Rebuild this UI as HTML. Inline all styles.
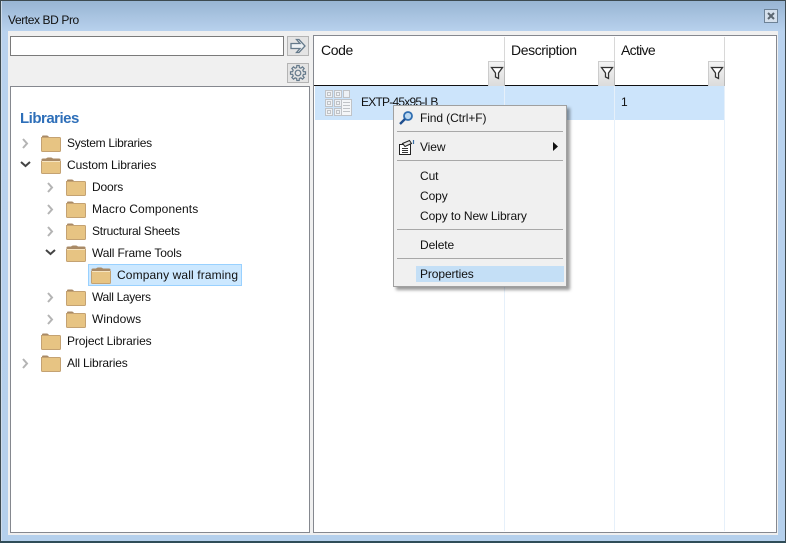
<!DOCTYPE html>
<html><head><meta charset="utf-8">
<style>
html,body{margin:0;padding:0;width:786px;height:543px;overflow:hidden;background:#fff}
body{position:relative;font-family:"Liberation Sans",sans-serif;font-size:12px;color:#111}
.a{position:absolute}
.t{position:absolute;white-space:nowrap;font-size:12px;line-height:16px;letter-spacing:-.1px}
.h{position:absolute;white-space:nowrap;font-size:14px;line-height:18px;letter-spacing:-.4px}
.s{position:absolute;left:397px;width:166px;height:1px;background:#a8a8a8}
.sep{position:absolute;top:37px;width:1px;height:494px;background:#e6f0fa}
.fb{position:absolute;top:61px;width:15px;height:24px;background:linear-gradient(#f4f4f4,#dcdcdc);border-right:1px solid #bbb;border-left:1px solid #ccc;border-top:1px solid #ccc}
svg{position:absolute;overflow:visible}
</style></head><body>
<svg width="0" height="0" style="position:absolute"><defs>
<g id="fo"><path d="M1 3V1.500Q1 .5 2 .5H6Q7 .5 8 2H9V3Z" fill="#a98a66"/><path d="M.5 2.500H18.500Q19.500 2.500 19.500 3.500V15.500Q19.500 16.500 18.500 16.500H1.500Q.5 16.500 .5 15.500Z" fill="#e7c483" stroke="#c4a272"/></g>
<g id="fe"><path d="M.5 5V2.500Q.5 1.500 2 1.500H5Q6 .5 7 .5H10Q11 .5 12 1.500H18Q19.500 1.500 19.500 2.500V5Z" fill="#a98a66"/><path d="M.5 4.500H19.500V15.500Q19.500 16.500 18.500 16.500H1.500Q.5 16.500 .5 15.500Z" fill="#e7c483" stroke="#c4a272"/><path d="M1 4.500H19" stroke="#f6e4c0"/></g>
<path id="cr" d="M1 1L5 5.500L1 10" fill="none" stroke="#b4b4b4" stroke-width="2"/>
<path id="cd" d="M0 1L4.500 5L9 1" fill="none" stroke="#444" stroke-width="2"/>
<g id="fn"><path d="M1.500 1.500H12.500L8.500 7V12.500L5.500 11V7Z" fill="#fff" stroke="#333" stroke-width="1.300"/></g>
</defs></svg>

<!-- window frame -->
<div class="a" style="left:0;top:0;width:786px;height:543px;box-sizing:border-box;border:1px solid #3d4a50;border-bottom:2px solid #2f4d58;background:linear-gradient(#98b5d3 0,#b9d2ee 31px,#b5d0ec 100%)"></div>
<div class="a" style="left:1px;top:1px;width:1px;height:540px;background:#cfdcea"></div>
<div class="a" style="left:8px;top:31px;width:770px;height:504px;background:#f0f0f0"></div>
<div class="t" style="left:8px;top:12px;letter-spacing:-.4px">Vertex BD Pro</div>
<!-- close -->
<div class="a" style="left:764px;top:9px;width:14px;height:14px;box-sizing:border-box;border:1px solid #6d8296;background:#d5e0ec"></div>
<svg style="left:764px;top:9px" width="14" height="14"><path d="M4 4L10 10M10 4L4 10" stroke="#5b6670" stroke-width="2"/></svg>

<!-- search -->
<div class="a" style="left:10px;top:36px;width:274px;height:20px;box-sizing:border-box;border:1px solid #7a7a7a;background:#fff"></div>
<div class="a" style="left:287px;top:36px;width:22px;height:20px;box-sizing:border-box;border:1px solid #b4b4b4;background:#e4e4e4"></div>
<svg style="left:287px;top:36px" width="22" height="20"><path d="M4 7.500H13L9.500 3.500H12L18 10L12 16.500H9.500L13 12.500H4Z" fill="#eef2f5" stroke="#64798a" stroke-width="1.300"/></svg>
<div class="a" style="left:287px;top:63px;width:22px;height:20px;box-sizing:border-box;border:1px solid #b4b4b4;background:#e4e4e4"></div>
<svg style="left:287px;top:63px" width="22" height="20"><g transform="translate(11 10)" fill="none" stroke="#64798a" stroke-width="1.200"><path d="M5.430-1.350L7.510-1.190V1.190L5.430 1.350L4.790 2.880L6.150 4.470L4.470 6.150L2.880 4.790L1.350 5.430L1.190 7.510H-1.190L-1.350 5.430L-2.880 4.790L-4.470 6.150L-6.150 4.470L-4.790 2.880L-5.430 1.350L-7.510 1.190V-1.190L-5.430-1.350L-4.790-2.880L-6.150-4.470L-4.470-6.150L-2.880-4.790L-1.350-5.430L-1.190-7.510H1.190L1.350-5.430L2.880-4.790L4.470-6.150L6.150-4.470L4.790-2.880Z"/><circle r="2.800"/></g></svg>

<!-- left panel -->
<div class="a" style="left:10px;top:86px;width:300px;height:447px;box-sizing:border-box;border:1px solid #85888f;background:#fff"></div>
<div class="a" style="left:20px;top:110px;font-size:15px;line-height:18px;font-weight:bold;letter-spacing:-.5px;color:#2e6fb9;white-space:nowrap">Libraries</div>

<div class="a" style="left:88px;top:264px;width:154px;height:22px;box-sizing:border-box;border:1px solid #99d1ff;background:#cce8ff"></div>

<svg style="left:22px;top:138px" width="8" height="12"><use href="#cr"/></svg>
<svg style="left:41px;top:135px" width="21" height="18"><use href="#fo"/></svg>
<div class="t" style="left:67px;top:135px;letter-spacing:-.28px">System Libraries</div>

<svg style="left:21px;top:161px" width="10" height="8"><use href="#cd"/></svg>
<svg style="left:41px;top:157px" width="21" height="18"><use href="#fe"/></svg>
<div class="t" style="left:67px;top:157px;letter-spacing:-.09px">Custom Libraries</div>

<svg style="left:47px;top:182px" width="8" height="12"><use href="#cr"/></svg>
<svg style="left:66px;top:179px" width="21" height="18"><use href="#fo"/></svg>
<div class="t" style="left:92px;top:179px;letter-spacing:-.18px">Doors</div>

<svg style="left:47px;top:204px" width="8" height="12"><use href="#cr"/></svg>
<svg style="left:66px;top:201px" width="21" height="18"><use href="#fo"/></svg>
<div class="t" style="left:92px;top:201px;letter-spacing:.1px">Macro Components</div>

<svg style="left:47px;top:226px" width="8" height="12"><use href="#cr"/></svg>
<svg style="left:66px;top:223px" width="21" height="18"><use href="#fo"/></svg>
<div class="t" style="left:92px;top:223px;letter-spacing:-.25px">Structural Sheets</div>

<svg style="left:46px;top:249px" width="10" height="8"><use href="#cd"/></svg>
<svg style="left:66px;top:245px" width="21" height="18"><use href="#fe"/></svg>
<div class="t" style="left:92px;top:245px;letter-spacing:-.15px">Wall Frame Tools</div>

<svg style="left:91px;top:267px" width="21" height="18"><use href="#fe"/></svg>
<div class="t" style="left:117px;top:267px;letter-spacing:.12px">Company wall framing</div>

<svg style="left:47px;top:292px" width="8" height="12"><use href="#cr"/></svg>
<svg style="left:66px;top:289px" width="21" height="18"><use href="#fo"/></svg>
<div class="t" style="left:92px;top:289px;letter-spacing:-.33px">Wall Layers</div>

<svg style="left:47px;top:314px" width="8" height="12"><use href="#cr"/></svg>
<svg style="left:66px;top:311px" width="21" height="18"><use href="#fo"/></svg>
<div class="t" style="left:92px;top:311px;letter-spacing:.08px">Windows</div>

<svg style="left:41px;top:333px" width="21" height="18"><use href="#fo"/></svg>
<div class="t" style="left:67px;top:333px;letter-spacing:-.13px">Project Libraries</div>

<svg style="left:22px;top:358px" width="8" height="12"><use href="#cr"/></svg>
<svg style="left:41px;top:355px" width="21" height="18"><use href="#fo"/></svg>
<div class="t" style="left:67px;top:355px;letter-spacing:-.16px">All Libraries</div>

<!-- right panel -->
<div class="a" style="left:313px;top:35px;width:464px;height:498px;box-sizing:border-box;border:1px solid #85888f;background:#fff"></div>
<div class="a" style="left:315px;top:86px;width:410px;height:34px;background:#cce4fb"></div>
<div class="sep" style="left:504px"></div>
<div class="sep" style="left:614px"></div>
<div class="sep" style="left:724px"></div>
<div class="a" style="left:504px;top:37px;width:1px;height:49px;background:#d8d8d8"></div>
<div class="a" style="left:614px;top:37px;width:1px;height:49px;background:#d8d8d8"></div>
<div class="a" style="left:724px;top:37px;width:1px;height:49px;background:#d8d8d8"></div>
<div class="a" style="left:314px;top:85px;width:411px;height:1px;background:#111"></div>
<div class="h" style="left:321px;top:41px">Code</div>
<div class="h" style="left:511px;top:41px">Description</div>
<div class="h" style="left:621px;top:41px;letter-spacing:-.7px">Active</div>
<div class="fb" style="left:488px"></div><svg style="left:490px;top:66px" width="14" height="15"><use href="#fn"/></svg>
<div class="fb" style="left:598px"></div><svg style="left:600px;top:66px" width="14" height="15"><use href="#fn"/></svg>
<div class="fb" style="left:708px"></div><svg style="left:710px;top:66px" width="14" height="15"><use href="#fn"/></svg>

<!-- row icon -->
<svg style="left:325px;top:90px" width="28" height="27" fill="#eef1f5" stroke="#c0c3c7">
<rect x=".5" y=".5" width="7" height="7"/><rect x="9.500" y=".5" width="7" height="7"/><rect x="18.500" y=".5" width="6" height="7"/>
<rect x=".5" y="9.500" width="7" height="7"/><rect x="9.500" y="9.500" width="7" height="7"/>
<rect x=".5" y="18.500" width="7" height="7"/><rect x="9.500" y="18.500" width="7" height="7"/>
<rect x="2.500" y="2.500" width="3" height="3"/><rect x="11.500" y="2.500" width="3" height="3"/><rect x="2.500" y="11.500" width="3" height="3"/><rect x="11.500" y="11.500" width="3" height="3"/><rect x="2.500" y="20.500" width="3" height="3"/><rect x="11.500" y="20.500" width="3" height="3"/>
<rect x="16.500" y="9.500" width="10" height="16" fill="#f4f6f8"/><path d="M18 12.500H25M18 15.500H25M18 18.500H25M18 21.500H25" fill="none"/>
</svg>
<div class="t" style="left:361px;top:94px;letter-spacing:-.78px">EXTP-45x95-LB</div>
<div class="t" style="left:621px;top:94px">1</div>

<!-- context menu -->
<div class="a" style="left:393px;top:105px;width:174px;height:182px;box-sizing:border-box;border:1px solid #a0a0a0;background:#f0f0f0;box-shadow:3px 3px 3px rgba(0,0,0,.4)"></div>
<div class="a" style="left:416px;top:266px;width:148px;height:16px;background:#c4dff6"></div>
<svg style="left:398px;top:110px" width="16" height="16"><circle cx="10" cy="6" r="4" fill="#bcd8f0" stroke="#2f6db0" stroke-width="1.800"/><path d="M7 9L2 14" stroke="#1f4f8f" stroke-width="2.400"/></svg>
<svg style="left:398px;top:139px" width="17" height="16"><path d="M1.500 5.500H12.500V15.500H1.500Z" fill="#fff" stroke="#222"/><path d="M4.500 4.500L11.500 1.500L13.500 4.500L7 7.500Z" fill="#e8e8e8" stroke="#222"/><path d="M4 9.500H10M4 11.500H10M4 13.500H10" stroke="#333"/><path d="M15.500 1V5" stroke="#3a6ea5" stroke-width="1.200"/></svg>
<div class="t" style="left:420px;top:110px">Find (Ctrl+F)</div>
<div class="s" style="top:131px"></div>
<div class="t" style="left:420px;top:139px">View</div>
<svg style="left:553px;top:142px" width="5" height="9"><path d="M0 0L5 4.500L0 9Z" fill="#111"/></svg>
<div class="s" style="top:160px"></div>
<div class="t" style="left:420px;top:168px">Cut</div>
<div class="t" style="left:420px;top:188px">Copy</div>
<div class="t" style="left:420px;top:208px">Copy to New Library</div>
<div class="s" style="top:229px"></div>
<div class="t" style="left:420px;top:237px">Delete</div>
<div class="s" style="top:258px"></div>
<div class="t" style="left:420px;top:266px">Properties</div>
</body></html>
